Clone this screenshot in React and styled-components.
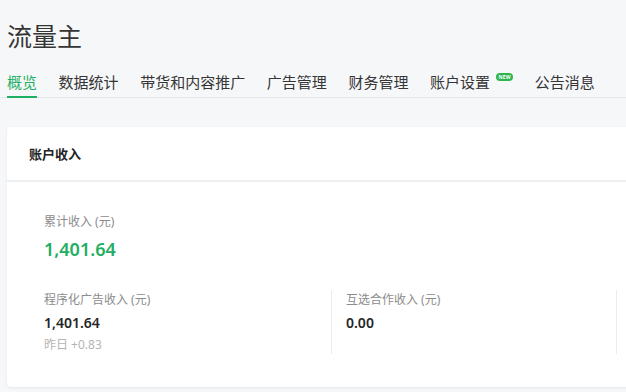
import React from "react"
import styled, { createGlobalStyle } from "styled-components"

const GlobalStyle = createGlobalStyle`
  html, body {
    margin: 0;
    padding: 0;
    background: #f6f7f9;
    overflow: hidden;
  }
  body {
    font-family: "Noto Sans", "Noto Sans CJK SC", sans-serif;
    color: #353535;
  }
`

const Page = styled.div`
  width: 626px;
  height: 392px;
  padding: 18px 0 0 7px;
  box-sizing: border-box;
  overflow: hidden;
`

const Title = styled.h1`
  margin: 0;
  font-size: 25px;
  line-height: 36px;
  font-weight: 400;
  color: #353535;
`

const Tabs = styled.nav`
  display: flex;
  margin-top: 16px;
  margin-left: -7px;
  padding-left: 7px;
  border-bottom: 1px solid #e4e6ea;
`

const Tab = styled.div`
  display: inline-flex;
  align-items: flex-start;
  margin-right: 21.6px;
  margin-bottom: -1px;
  padding-bottom: 2px;
  font-size: 15px;
  line-height: 24px;
  white-space: nowrap;
  color: ${({ $active }) => ($active ? "#1fb063" : "#353535")};
  border-bottom: 2px solid ${({ $active }) => ($active ? "#1fb063" : "transparent")};
`

const NewBadge = styled.span`
  display: inline-flex;
  align-items: center;
  justify-content: center;
  width: 17px;
  height: 8px;
  margin: 3px 0 0 6px;
  border-radius: 4px;
  background: #2fb54f;
  color: #fff;
  font-size: 5px;
  font-weight: 700;
  line-height: 8px;
  letter-spacing: 0.2px;
`

const Card = styled.section`
  width: 680px;
  margin-top: 29px;
  background: #fff;
  border-radius: 4px;
  box-shadow: 0 1px 3px rgba(0, 0, 0, 0.07);
`

const CardHeader = styled.div`
  display: flex;
  align-items: center;
  height: 53px;
  padding-left: 22px;
  font-size: 13px;
  font-weight: 700;
  color: #222;
  border-bottom: 2px solid #eff0f2;
`

const CardBody = styled.div`
  padding: 30px 0 33px 37px;
`

const Label = styled.div`
  font-size: 12px;
  line-height: 20px;
  color: #8c8c8c;
`

const Total = styled.div`
  margin-top: 4px;
  font-size: 18px;
  line-height: 26px;
  font-weight: 600;
  color: #1fae62;
`

const StatRow = styled.div`
  display: grid;
  grid-template-columns: 287px 285px 100px;
  margin-top: 28px;
`

const Stat = styled.div`
  min-height: 63px;
  ${({ $divided }) =>
    $divided &&
    `
    border-left: 1px solid #ececec;
    padding-left: 14px;
  `}
`

const Amount = styled.div`
  margin-top: 2px;
  font-size: 14px;
  line-height: 22px;
  font-weight: 600;
  color: #262626;
`

const Delta = styled.div`
  margin-top: 2px;
  font-size: 12px;
  line-height: 18px;
  color: #b5b5b5;
`

const tabs = ["概览", "数据统计", "带货和内容推广", "广告管理", "财务管理", "账户设置", "公告消息"]

const stats = [
  { label: "程序化广告收入 (元)", amount: "1,401.64", delta: "昨日 +0.83" },
  { label: "互选合作收入 (元)", amount: "0.00" },
  { label: "", amount: "" },
]

export default function App() {
  return (
    <Page>
      <GlobalStyle />
      <Title>流量主</Title>
      <Tabs>
        {tabs.map((t, i) => (
          <Tab key={t} $active={i === 0}>
            {t}
            {t === "账户设置" && <NewBadge>NEW</NewBadge>}
          </Tab>
        ))}
      </Tabs>
      <Card>
        <CardHeader>账户收入</CardHeader>
        <CardBody>
          <Label>累计收入 (元)</Label>
          <Total>1,401.64</Total>
          <StatRow>
            {stats.map((s, i) => (
              <Stat key={i} $divided={i > 0}>
                {s.label && <Label>{s.label}</Label>}
                {s.amount && <Amount>{s.amount}</Amount>}
                {s.delta && <Delta>{s.delta}</Delta>}
              </Stat>
            ))}
          </StatRow>
        </CardBody>
      </Card>
    </Page>
  )
}
